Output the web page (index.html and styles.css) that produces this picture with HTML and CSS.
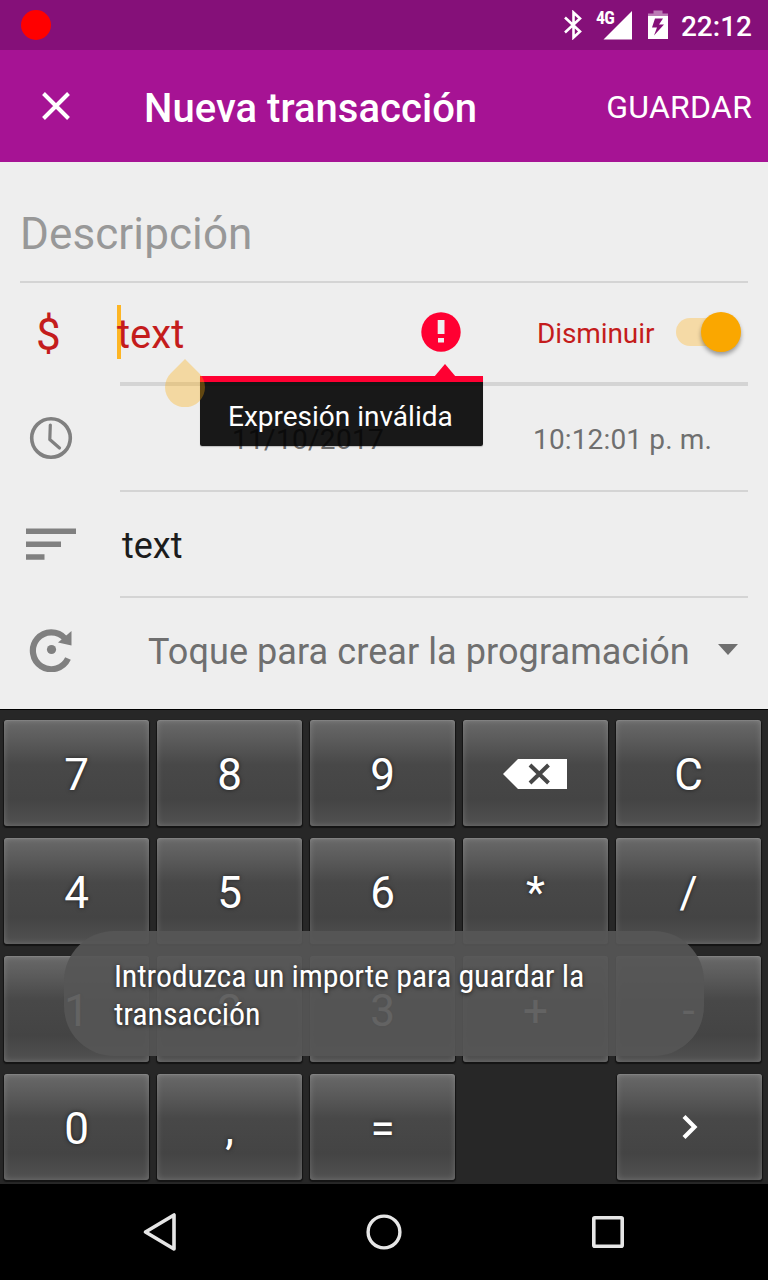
FILE: index.html
```html
<!DOCTYPE html>
<html lang="es">
<head>
<meta charset="utf-8">
<title>Nueva transacción</title>
<link rel="stylesheet" href="styles.css">
</head>
<body>
<div class="screen">
  <header class="status">
    <span class="record"></span>
    <svg class="bt" width="20" height="30" viewBox="0 0 20 30"><path d="M2 7.500L17 21.500L10.500 27.500V2.500L17 8.500L2 22.500" fill="none" stroke="#fff" stroke-width="2.600"/></svg>
    <div class="signal"><span class="net">4G</span><svg width="36" height="30" viewBox="0 0 36 30"><path d="M36 1V29.500H7.500z" fill="#fff"/></svg></div>
    <svg class="battery" width="20" height="30" viewBox="0 0 20 30"><path d="M5.500 0.500h9v3H20v3H0v-3h5.500z" fill="#fff" opacity=".45"/><path fill-rule="evenodd" d="M0 6h20V29H0zM7 8.500L4 17.500h5L6 25.500L16 14.500h-5l4-6z" fill="#fff"/></svg>
    <span class="clock">22:12</span>
  </header>
  <div class="appbar">
    <svg class="close" width="30" height="30" viewBox="0 0 30 30"><path d="M2.500 2.500L27.500 27.500M27.500 2.500L2.500 27.500" stroke="#fff" stroke-width="4"/></svg>
    <h1 class="title">Nueva transacción</h1>
    <span class="save">GUARDAR</span>
  </div>
  <main class="form">
    <div class="row desc"><span class="hint">Descripción</span></div>
    <div class="row amount">
      <span class="currency">$</span>
      <span class="value"><i class="caret"></i>text</span>
      <svg class="alert" width="40" height="40" viewBox="0 0 40 40"><circle cx="20" cy="20" r="19.700" fill="#ff0032"/><path d="M16.700 8h6.800v14h-6.800zM17 26h6v4.500h-6z" fill="#eee"/></svg>
      <span class="type">Disminuir</span>
      <span class="switch"><i class="thumb"></i></span>
    </div>
    <div class="row when">
      <svg class="icon" width="44" height="44" viewBox="0 0 44 44"><circle cx="22" cy="22" r="19.300" fill="none" stroke="#808080" stroke-width="3.600"/><path d="M21.300 9L20.800 23.500L30.500 32" fill="none" stroke="#808080" stroke-width="3.200" stroke-linecap="round" stroke-linejoin="round"/></svg>
      <span class="date">11/10/2017</span>
      <span class="time">10:12:01 p. m.</span>
    </div>
    <div class="row notes">
      <svg class="icon" width="52" height="34" viewBox="0 0 52 34"><path d="M1 1.500h50v5.500H1zM1 14.500h35v5.500H1zM1 27.300h18.500v5.500H1z" fill="#808080"/></svg>
      <span class="note">text</span>
    </div>
    <div class="row schedule">
      <svg class="icon" width="44" height="46" viewBox="0 0 44 46"><path d="M39 32.500A18.400 18.400 0 1 1 36 12.500" fill="none" stroke="#808080" stroke-width="6.200"/><path d="M42.500 5v14.500L29 16.500z" fill="#808080"/><circle cx="22.500" cy="23.500" r="4.600" fill="#808080"/></svg>
      <span class="pick">Toque para crear la programación</span>
      <svg class="arrow" width="20" height="11" viewBox="0 0 20 11"><path d="M0 0h20L10 11z" fill="#6f6f6f"/></svg>
    </div>
    <div class="error"><svg class="tip" width="22" height="13" viewBox="0 0 22 13"><path d="M0 13L11 0l11 13z" fill="#ff0032"/></svg><span>Expresión inválida</span></div>
    <svg class="handle" width="40" height="48" viewBox="0 0 40 48"><path d="M20 0L34 14A20 20 0 1 1 6 14z" fill="#ffaa00" opacity=".32"/></svg>
  </main>
  <section class="keypad">
    <div class="keys"><b class="key">7</b><b class="key">8</b><b class="key">9</b><b class="key"><svg class="erase" width="64" height="30" viewBox="0 0 64 30"><path d="M0 15L15 0h49v30H15z" fill="#fff"/><path d="M27 6l18.500 18M45.500 6L27 24" stroke="#474747" stroke-width="4"/></svg></b><b class="key">C</b></div>
    <div class="keys"><b class="key">4</b><b class="key">5</b><b class="key">6</b><b class="key">*</b><b class="key">/</b></div>
    <div class="keys"><b class="key">1</b><b class="key">2</b><b class="key">3</b><b class="key">+</b><b class="key">-</b></div>
    <div class="keys"><b class="key">0</b><b class="key">,</b><b class="key">=</b><b class="key next"><svg width="16" height="26" viewBox="0 0 16 26"><path d="M2 2.500L12.500 13L2 23.500" fill="none" stroke="#fff" stroke-width="4.200"/></svg></b></div>
  </section>
  <div class="toast"><p>Introduzca un importe para guardar la<br>transacción</p></div>
  <nav class="nav">
    <svg width="224" height="96" viewBox="0 0 224 96"><path d="M126 31v34L97.500 48z" fill="none" stroke="#e6e6e6" stroke-width="3.600" stroke-linejoin="round"/></svg>
    <svg width="224" height="96" viewBox="0 0 224 96"><circle cx="112" cy="48" r="15.900" fill="none" stroke="#e6e6e6" stroke-width="3.400"/></svg>
    <svg width="224" height="96" viewBox="0 0 224 96"><rect x="97.800" y="33.800" width="28.400" height="28.400" rx="1" fill="none" stroke="#e6e6e6" stroke-width="3.600"/></svg>
  </nav>
</div>
</body>
</html>
```
FILE: styles.css
```css
* { box-sizing: border-box; }
body { margin: 0; font-family: Roboto, sans-serif; }
svg { display: block; flex: none; }
.screen { position: relative; width: 768px; height: 1280px; display: flex; flex-direction: column; overflow: hidden; white-space: nowrap; }

.status { height: 50px; background: #851079; display: flex; align-items: center; padding: 0 16px 0 21px; color: #fff; }
.record { width: 30px; height: 30px; border-radius: 50%; background: #f00; margin-right: auto; }
.bt { margin-right: 13px; }
.signal { position: relative; width: 36px; margin-right: 16px; }
.net { position: absolute; left: 0; top: -1px; font: 700 18px/18px "Roboto Condensed", Roboto, sans-serif; letter-spacing: -.8px; }
.battery { margin-right: 13px; }
.clock { font-size: 28px; font-weight: 500; line-height: 34px; padding-top: 3px; }

.appbar { height: 112px; background: #a61394; color: #fff; display: flex; align-items: center; padding: 0 16px 0 41px; }
.title { margin: 4px auto 0 73px; font-size: 40px; font-weight: 500; letter-spacing: .04px; }
.save { font-size: 32px; padding-top: 2px; letter-spacing: .3px; margin-right: -.3px; }

.form { position: relative; height: 547px; background: #eee; padding-left: 20px; padding-right: 20px; }
.row { display: flex; align-items: center; position: relative; }
.row::after { content: ""; position: absolute; left: 100px; right: 0; bottom: 0; height: 2px; background: #d4d4d4; }
.desc { height: 121px; }
.desc::after { left: 0; }
.hint { font-size: 44px; color: #989898; padding-top: 22px; letter-spacing: .1px; }
.amount { height: 103px; color: #c41c1c; }
.amount::after { height: 4px; }
.currency { font-size: 44px; width: 97px; padding-left: 16px; }
.value { position: relative; isolation: isolate; font-size: 40px; width: 304px; }
.caret { position: absolute; left: 0; top: -6px; width: 4px; height: 54px; background: #ffaa00; opacity: .85; z-index: -1; }
.alert { margin-top: -6px; }
.type { font-size: 28px; width: 139px; margin-left: 76px; padding-bottom: 3px; letter-spacing: -.1px; }
.switch { position: relative; width: 56px; height: 28px; border-radius: 14px; background: #f5daa6; margin-bottom: 5px; }
.thumb { position: absolute; right: -9px; top: -6px; width: 40px; height: 40px; border-radius: 50%; background: #faa700; box-shadow: 0 3px 4px rgba(0,0,0,.35); }
.when { height: 106px; padding-bottom: 2px; font-size: 28px; color: #6f6f6f; }
.when .icon { margin-left: 9px; }
.date { margin-left: 159px; width: 301px; padding-top: 3px; letter-spacing: .3px; }
.time { padding-top: 3px; letter-spacing: .15px; }
.notes { height: 106px; padding-bottom: 2px; font-size: 36px; color: #1c1c1c; }
.notes .icon { margin-left: 5px; }
.note { margin-left: 45px; padding-top: 4px; }
.schedule { height: 111px; font-size: 36px; color: #6f6f6f; }
.schedule::after { display: none; }
.schedule .icon { margin: 0 0 9px 9px; }
.pick { margin-left: 75px; padding-bottom: 4px; letter-spacing: .08px; }
.arrow { margin: 0 10px 8px auto; }
.handle { position: absolute; left: 165px; top: 197px; }
.error { position: absolute; left: 200px; top: 214px; width: 283px; height: 70px; border-top: 6px solid #ff0032; background: rgba(0,0,0,.9); background-clip: padding-box; border-radius: 0 0 2px 2px; box-shadow: 0 1px 1px rgba(0,0,0,.2); color: #fff; font-size: 28px; line-height: 33px; padding: 18px 0 0 28px; }
.tip { position: absolute; left: 234px; top: -18px; }

.keypad { height: 475px; background: #272727; border-top: 1px solid #000; padding: 10px 6px 4px 4px; display: flex; flex-direction: column; gap: 12px; }
.keys { display: flex; gap: 8px; }
.key { flex: none; width: 145px; height: 106px; border-radius: 3px; background: linear-gradient(#696969 0%, #5a5a5a 20%, #484848 42%, #444 75%, #515151 100%); box-shadow: 0 1px 1px 1px #141414, inset 0 0 6px rgba(255,255,255,.2), inset 0 1px 1px rgba(255,255,255,.1); color: #fff; display: flex; align-items: center; justify-content: center; font-size: 44px; font-weight: 400; line-height: 52px; padding-top: 4px; text-shadow: 0 0 4px rgba(0,0,0,.6); }
.erase { margin: -2px 0 0 -1px; }
.next { margin-left: 154px; padding-top: 0; }

.toast { position: absolute; left: 64px; top: 931px; width: 640px; height: 125px; border-radius: 50px; background: rgba(86,86,86,.92); color: #fff; padding: 26px 50px; }
.toast p { margin: 0; font: 32px/38px "Roboto Condensed", Roboto, sans-serif; letter-spacing: -.13px; text-shadow: 0 1px 4px rgba(0,0,0,.7); }

.nav { height: 96px; background: #000; display: flex; justify-content: center; }
```
